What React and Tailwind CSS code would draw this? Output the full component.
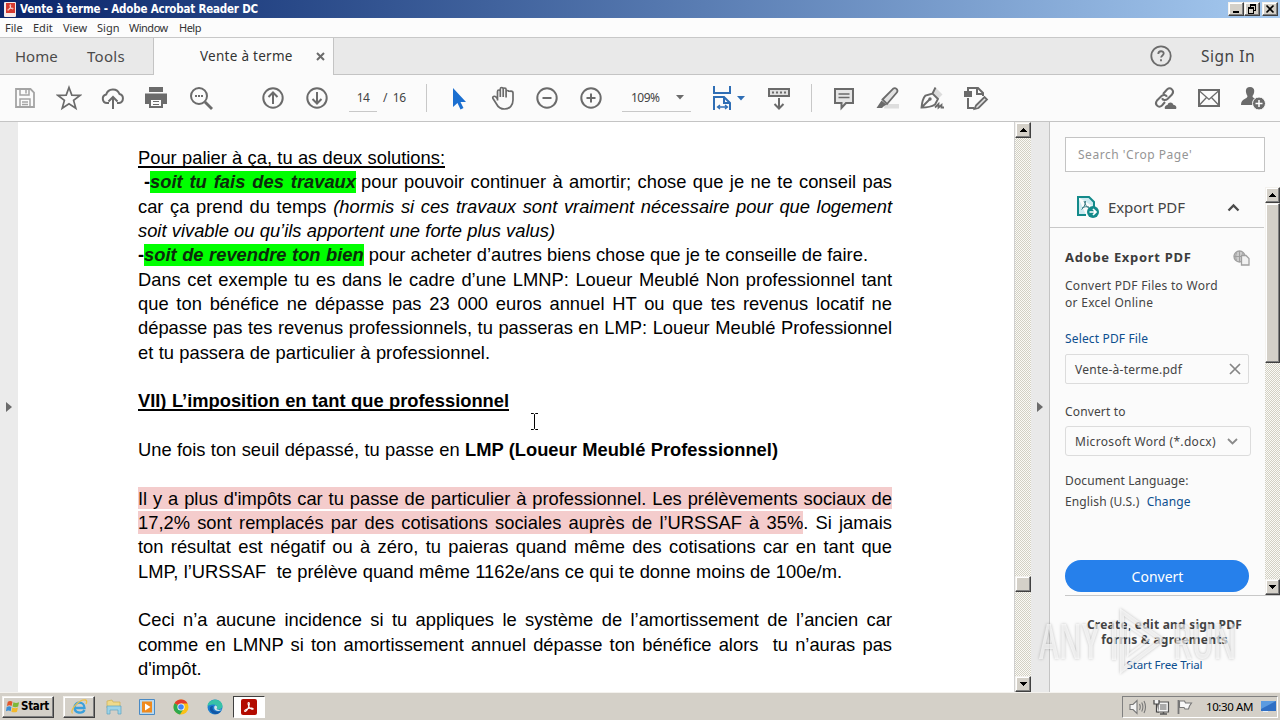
const DITHER =
  'bg-[repeating-conic-gradient(#d2d0c4_0_25%,#fbfaf6_0_50%)] bg-[length:2px_2px]';
const RAISED =
  'bg-[#d4d0c8] border border-t-[#f4f2ee] border-l-[#f4f2ee] border-r-[#404040] border-b-[#404040] shadow-[inset_-1px_-1px_0_#808080,inset_1px_1px_0_#fff]';

function Icon({ size = 26, children, className = '' }) {
  return (
    <svg
      width={size}
      height={size}
      viewBox="0 0 26 26"
      fill="none"
      stroke="#6b6b6b"
      strokeWidth="2"
      className={`shrink-0 ${className}`}
    >
      {children}
    </svg>
  );
}

function Slot({ children }) {
  return <div className="w-11 flex justify-center shrink-0">{children}</div>;
}

function Arrow({ dir = 'up' }) {
  return (
    <svg width="7" height="4" viewBox="0 0 7 4" shapeRendering="crispEdges">
      <path d={dir === 'up' ? 'M3 0h1v1h1v1h1v1h1v1H0V3h1V2h1V1h1z' : 'M0 0h7v1H6v1H5v1H4v1H3V3H2V2H1V1H0z'} fill="#000" />
    </svg>
  );
}

function ScrollButton({ dir }) {
  return (
    <div className={`h-4 w-full shrink-0 flex items-center justify-center ${RAISED}`}>
      <Arrow dir={dir} />
    </div>
  );
}

function WinButton({ children, className = '' }) {
  return (
    <div className={`w-4 h-[14px] flex items-center justify-center ${RAISED} ${className}`}>
      <svg className="shrink-0" width="12" height="10" viewBox="0 0 12 10" fill="none" stroke="#000" shapeRendering="crispEdges">
        {children}
      </svg>
    </div>
  );
}

function AcrobatMark({ size, stroke }) {
  return (
    <svg width={size} height={size} viewBox="0 0 20 20" fill="none" stroke={stroke} strokeWidth="1.5">
      <path d="M9.5 3.5c1.8 0 1 4.5-1 8.5-1.5 3-3.5 5-4.5 4.2-1-1 1.5-3.2 5-4.2 3.5-.9 7-.8 7 .6 0 1.6-3.3.5-5.2-1.8C8.5 8 8 3.5 9.5 3.5z" />
    </svg>
  );
}

function TitleBar() {
  return (
    <div className="h-[18px] flex items-center bg-linear-to-r from-[#0a246a] to-[#a6caf0] pl-1 pr-[2px]">
      <div className="w-3 h-[15px] bg-[#f6e9e8] rounded-[1px] flex flex-col items-center">
        <div className="mt-px bg-[#d63a2f] w-[9px] h-[10px] flex items-center justify-center">
          <AcrobatMark size={9} stroke="#fff" />
        </div>
      </div>
      <span className="ml-[4px] text-white font-bold text-[11.5px] tracking-[-0.19px] leading-[17px] whitespace-nowrap font-['DejaVu_Sans_Condensed','DejaVu_Sans',sans-serif]">
        Vente à terme - Adobe Acrobat Reader DC
      </span>
      <div className="ml-auto flex">
        <WinButton>
          <path d="M3 8h6" strokeWidth="2" />
        </WinButton>
        <WinButton>
          <path d="M4 1h6" strokeWidth="2" />
          <path d="M4.5 1v2M9.500 1v5H8" />
          <path d="M2 4h6" strokeWidth="2" />
          <path d="M2.500 4v5.500h5V4" />
        </WinButton>
        <WinButton className="ml-[2px]">
          <path d="M2.500 1.500l7 7M9.500 1.500l-7 7" strokeWidth="1.700" shapeRendering="auto" />
        </WinButton>
      </div>
    </div>
  );
}

function MenuBar() {
  return (
    <div className="h-[19px] flex items-center bg-[#fcfcfc] pl-[5px] text-[11px] leading-none text-[#333] font-['Noto_Sans',sans-serif]">
      <span className="w-[28px]">File</span>
      <span className="w-[30px]">Edit</span>
      <span className="w-[34px]">View</span>
      <span className="w-[32px]">Sign</span>
      <span className="w-[50px] tracking-[-0.5px]">Window</span>
      <span className="tracking-[-0.5px]">Help</span>
    </div>
  );
}

function TabBar() {
  return (
    <div className="h-[38px] flex bg-[#e9e9e9] border-t border-[#c8c8c8] text-[#4b4b4b] font-['Noto_Sans',sans-serif]">
      <div className="w-[154px] flex items-center border-b border-r border-[#c4c4c4] pl-[15px] text-[15px]">
        <span className="w-[72px]">Home</span>
        <span className="tracking-[0.3px]">Tools</span>
      </div>
      <div className="w-[179px] flex items-center bg-[#fbfbfb] pl-[46px] pr-2 text-[13.5px] text-[#333]">
        <span className="tracking-[0.02em] whitespace-nowrap">Vente à terme</span>
        <svg className="ml-auto" width="9" height="9" viewBox="0 0 9 9" stroke="#6b6b6b" strokeWidth="2">
          <path d="M1 1l7 7M8 1L1 8" />
        </svg>
      </div>
      <div className="flex-1 flex items-center border-b border-l border-[#c4c4c4] pr-[25px]">
        <svg className="ml-auto" width="22" height="22" viewBox="0 0 22 22" fill="none" stroke="#6b6b6b" strokeWidth="1.8">
          <circle cx="11" cy="11" r="9.7" />
          <path d="M8.3 9c0-3.600 5.400-3.600 5.400-.4 0 1.800-2.600 2-2.600 4" />
          <path d="M11 14.3v2" />
        </svg>
        <span className="ml-[29px] mt-[2px] text-[15.5px] tracking-[0.5px] text-[#444] whitespace-nowrap">Sign In</span>
      </div>
    </div>
  );
}

function Toolbar() {
  return (
    <div className="h-[47px] flex items-center bg-[#fbfbfb] border-b border-[#c4c4c4] pl-[3px] text-[12px] text-[#444] font-['Noto_Sans',sans-serif]">
      <Slot>
        <Icon className="opacity-60">
          <path d="M4 4h14.5L22 7.500V22H4z" strokeWidth="1.800" />
          <path d="M8 4v6h9V4M14 5v3.500M8 22v-8h10v8M10 17h6M10 19.500h6" strokeWidth="1.500" />
        </Icon>
      </Slot>
      <Slot>
        <Icon>
          <path d="M13 2.500l2.800 7.600 8.200.3-6.400 5 2.200 7.800L13 18.700l-6.800 4.500 2.200-7.800-6.400-5 8.200-.3z" strokeWidth="1.700" />
        </Icon>
      </Slot>
      <Slot>
        <Icon>
          <path d="M9 18H7a4.300 4.300 0 0 1-.8-8.500A7 7 0 0 1 19.500 9a4.600 4.600 0 0 1-.5 9h-2" />
          <path d="M13 24V12.500M8.500 16.500L13 12l4.500 4.500" />
        </Icon>
      </Slot>
      <Slot>
        <Icon>
          <path d="M5 2h14v5H5z" fill="#6b6b6b" stroke="none" />
          <path d="M1 8.500h22v10.500h-4v-5H5v5H1z" fill="#6b6b6b" stroke="none" />
          <path d="M6 14h12v8H6z" />
          <path d="M9 16.500h6M9 19.500h6" strokeWidth="1" />
        </Icon>
      </Slot>
      <Slot>
        <Icon>
          <circle cx="11" cy="11" r="8" />
          <path d="M17 17l7 7" strokeWidth="2.800" />
          <path d="M7 11h2M10 11h2M13 11h2" strokeWidth="1.800" />
        </Icon>
      </Slot>
      <div className="w-[28px]" />
      <Slot>
        <Icon>
          <circle cx="13" cy="13" r="9.700" />
          <path d="M13 19V8M8.500 12L13 7.500l4.500 4.500" />
        </Icon>
      </Slot>
      <Slot>
        <Icon>
          <circle cx="13" cy="13" r="9.700" />
          <path d="M13 7v11M8.500 14L13 18.500l4.500-4.500" />
        </Icon>
      </Slot>
      <div className="ml-[10px] w-[28px] h-[27px] flex items-center justify-center border-b border-[#c8c8c8] tracking-[-0.5px]">14</div>
      <span className="ml-[6px] w-[43px] whitespace-pre tracking-[-0.3px]">/  16</span>
      <div className="w-px h-7 bg-[#c8c8c8]" />
      <div className="w-[10px]" />
      <Slot>
        <Icon>
          <path d="M7 3v19l4.500-4 3 6.500 3-1.500-3-6H20z" fill="#1b6fd0" stroke="none" />
        </Icon>
      </Slot>
      <Slot>
        <Icon>
          <path
            d="M7.500 15.500V6.500c0-2 2.800-2 2.800 0V12 4c0-2 2.900-2 2.900 0v8-7.500c0-2 2.900-2 2.900 0V12.500 7c0-2 2.900-2 2.900 0M19 7c0-1 4-1.500 4 1v7c0 5-3 9-8.500 9-4.500 0-6.500-2-8-5l-3.500-5.500c-1-2 1.500-3 3-1.500l2 2.500"
            strokeWidth="1.700"
          />
        </Icon>
      </Slot>
      <Slot>
        <Icon>
          <circle cx="13" cy="13" r="9.700" />
          <path d="M8.500 13h9" />
        </Icon>
      </Slot>
      <Slot>
        <Icon>
          <circle cx="13" cy="13" r="9.700" />
          <path d="M8.500 13h9M13 8.500v9" />
        </Icon>
      </Slot>
      <div className="ml-[9px] w-[69px] h-[27px] flex items-center border-b border-[#c8c8c8] pl-[9px] pr-[7px]">
        <span className="tracking-[-0.5px]">109%</span>
        <svg className="ml-auto" width="8" height="5">
          <path d="M0 0h8L4 4.500z" fill="#6b6b6b" />
        </svg>
      </div>
      <div className="ml-[18px] flex items-center">
        <Icon>
          <g stroke="#2f6eb5">
            <path d="M5 1v7h16V1" />
            <path d="M5 25V12h10l6 6v7M15 12v6h6" />
            <path d="M9 22h9M11 20l-2.500 2 2.500 2M16 20l2.500 2-2.500 2" strokeWidth="1.300" />
          </g>
        </Icon>
        <svg className="ml-[2px]" width="8" height="5">
          <path d="M0 0h8L4 4.500z" fill="#2f6eb5" />
        </svg>
      </div>
      <div className="ml-[12px]">
        <Slot>
          <Icon>
            <path d="M3 4h20v7H3z" fill="#e0e0e0" />
            <path d="M6 7.500h14" strokeDasharray="2 2" />
            <path d="M13 13v10M8.500 19l4.500 4.500 4.500-4.500" />
          </Icon>
        </Slot>
      </div>
      <div className="ml-[10px] w-px h-7 bg-[#c8c8c8]" />
      <div className="w-[10px]" />
      <Slot>
        <Icon>
          <path d="M4 4h18v14h-7l-4.500 5v-5H4z" fill="#e6e6e6" />
          <path d="M7.500 9h11M7.500 12.500h11" strokeWidth="1.500" />
        </Icon>
      </Slot>
      <Slot>
        <Icon>
          <path d="M10 19h14v4.500H9z" fill="#dedede" stroke="none" />
          <path d="M7.500 14.500L18 3.800c2.500-2 5.500 1 4 3.500L12 19z" fill="#e2e2e2" strokeWidth="1.800" />
          <path d="M6.500 15.500l5 4-3 2-1.500 1.500H1.500z" fill="#6b6b6b" stroke="none" />
        </Icon>
      </Slot>
      <Slot>
        <Icon>
          <path d="M14 8.500L16.500 2.500l7 7-4.500 4.500z" fill="#dcdcdc" stroke="none" />
          <path d="M2.500 22.500c.5-5 1-9 4-12l7-2L19 14l-3 5.500c-3 2-8 3-13.500 3zM3.500 21.500l7-7M13.500 8.500L16.500 2.500" strokeWidth="1.900" />
          <circle cx="11" cy="14" r="1.700" fill="#6b6b6b" stroke="none" />
          <path d="M16 22.500l3.500-3.500v3.500l3-2.500v2.500H25" strokeWidth="1.800" />
        </Icon>
      </Slot>
      <Slot>
        <Icon>
          <path d="M5 6V3h10l5 5v3M14 3v6h6M5 13v10h6" strokeWidth="2" />
          <path d="M1 6h8v6H1z" fill="#6b6b6b" stroke="none" />
          <path d="M13 20.500L21.500 12l2.500 2.500L15.500 23l-4 1z" fill="#e2e2e2" strokeWidth="1.800" />
        </Icon>
      </Slot>
      <div className="ml-auto flex pr-[5px]">
        <Slot>
          <Icon>
            <path d="M11 9l4-4.500c3.500-3 8 1 5 5l-4.500 4.500c-2 1.700-4.500 1.300-5.500-.8" />
            <path d="M13 17l-3 3.500c-3.500 3-8-1-5-5L9.500 11c2-1.700 4.500-1.300 5.500.8" />
            <path d="M13 24c-1-3 1.500-4 2.500-4 1-3.500 5.500-3 6 0 2.500 0 3.500 2.500 2.500 4z" fill="#6b6b6b" stroke="none" />
          </Icon>
        </Slot>
        <Slot>
          <Icon>
            <path d="M3 5h20v16H3z" />
            <path d="M3 5.500l10 9 10-9M3 20.500l7.500-8M23 20.500l-7.500-8" strokeWidth="1.300" />
          </Icon>
        </Slot>
        <Slot>
          <Icon>
            <path d="M10 2c6 0 4.500 7 2.500 9 0 2.500 3.500 2 4.500 4l-3 5H1c0-7 6.500-5.500 6.500-9C5.500 8 4.500 2 10 2z" fill="#6b6b6b" stroke="none" />
            <circle cx="19" cy="18.500" r="6.500" fill="#6b6b6b" stroke="#fbfbfb" strokeWidth="1" />
            <path d="M15.500 18.500h7M19 15v7" stroke="#fff" strokeWidth="1.500" />
          </Icon>
        </Slot>
      </div>
    </div>
  );
}

function Line({ className = 'w-[754px]', children }) {
  return (
    <div className={`h-[24.33px] whitespace-nowrap text-justify [text-align-last:justify] ${className}`}>
      {children}
    </div>
  );
}

function Green({ className, children }) {
  return (
    <b className={`bg-[#00ff00] italic block h-[22px] mt-px leading-[22px] text-[#0b2b0b] [text-align-last:justify] ${className}`}>
      {children}
    </b>
  );
}

function Pink({ children }) {
  return <span className="bg-[#f4cccc] py-[0.75px]">{children}</span>;
}

function Page() {
  return (
    <div className="flex-1 bg-white overflow-hidden pl-[120px] pt-[24px] text-[18.33px] leading-[24.33px] text-black font-['Liberation_Sans',Arial,sans-serif]">
      <Line className="w-[307px] underline decoration-[1.5px] underline-offset-[2px] [text-decoration-skip-ink:none]">
        Pour palier à ça, tu as deux solutions:
      </Line>
      <Line className="w-[754px] flex">
        <b className="pl-[6px] w-[12px]">-</b>
        <Green className="w-[206px]">soit tu fais des travaux</Green>
        <span className="flex-1 pl-[5px]">pour pouvoir continuer à amortir; chose que je ne te conseil pas</span>
      </Line>
      <Line>
        car ça prend du temps <i>(hormis si ces travaux sont vraiment nécessaire pour que logement</i>
      </Line>
      <Line className="w-[417px] italic">soit vivable ou qu’ils apportent une forte plus valus)</Line>
      <Line className="w-[730px] flex">
        <b className="w-[6px]">-</b>
        <Green className="w-[220px]">soit de revendre ton bien</Green>
        <span className="flex-1 pl-[5px]">pour acheter d’autres biens chose que je te conseille de faire.</span>
      </Line>
      <Line>Dans cet exemple tu es dans le cadre d’une LMNP: Loueur Meublé Non professionnel tant</Line>
      <Line>que ton bénéfice ne dépasse pas 23 000 euros annuel HT ou que tes revenus locatif ne</Line>
      <Line>dépasse pas tes revenus professionnels, tu passeras en LMP: Loueur Meublé Professionnel</Line>
      <Line className="w-[352px]">et tu passera de particulier à professionnel.</Line>
      <Line />
      <Line className="w-[371px] tracking-[-0.02px] font-bold underline decoration-2 underline-offset-[2px] [text-decoration-skip-ink:none]">
        VII) L’imposition en tant que professionnel
      </Line>
      <Line />
      <Line className="w-[640px]">
        Une fois ton seuil dépassé, tu passe en <b>LMP (Loueur Meublé Professionnel)</b>
      </Line>
      <Line />
      <Line>
        <Pink>Il y a plus d'impôts car tu passe de particulier à professionnel. Les prélèvements sociaux de</Pink>
      </Line>
      <Line>
        <Pink>17,2% sont remplacés par des cotisations sociales auprès de l’URSSAF à 35%</Pink>. Si jamais
      </Line>
      <Line>ton résultat est négatif ou à zéro, tu paieras quand même des cotisations car en tant que</Line>
      <Line className="w-[704px]">LMP, l’URSSAF&nbsp; te prélève quand même 1162e/ans ce qui te donne moins de 100e/m.</Line>
      <Line />
      <Line>Ceci n’a aucune incidence si tu appliques le système de l’amortissement de l’ancien car</Line>
      <Line>comme en LMNP si ton amortissement annuel dépasse ton bénéfice alors&nbsp; tu n’auras pas</Line>
      <Line className="w-[64px]">d'impôt.</Line>
    </div>
  );
}

function SidePanel() {
  return (
    <div className="relative w-[231px] border-l border-[#c4c4c4] bg-[#fbfbfb] flex flex-col font-['Noto_Sans',sans-serif] text-[12px] text-[#444]">
      <div className="ml-[15px] mt-[15px] w-[200px] h-[35px] shrink-0 border border-[#c4c4c4] bg-white flex items-center pl-3 pt-px text-[#959595] tracking-[0.53px]">
        Search 'Crop Page'
      </div>
      <div className="flex h-[408px] mt-[15px] shrink-0">
        <div className="w-[214px] flex flex-col">
          <div className="h-[41px] shrink-0 border-b border-[#c8c8c8] flex items-center pl-[26px] pr-[24px]">
            <svg width="24" height="24" viewBox="0 0 24 24" fill="none" stroke="#138a8a" strokeWidth="2">
              <path d="M2 2h11l5 5v5M2 2v18h8" fill="#cdeaf0" />
              <path d="M2 1v19h8" />
              <path d="M8 6c1.500 3 2 6 5 7M9.500 6c0 4-2 7-4 8.500M6 13c2-1.500 5-1.500 7-1" stroke="#3d7e86" strokeWidth="1" />
              <circle cx="17" cy="17" r="6" fill="#138a8a" stroke="none" />
              <path d="M13.500 17h6M17 14l3 3-3 3" stroke="#fff" strokeWidth="1.700" />
            </svg>
            <span className="ml-[8px] text-[15px] tracking-[-0.1px] whitespace-nowrap">Export PDF</span>
            <svg className="ml-auto" width="13" height="9" viewBox="0 0 13 9" fill="none" stroke="#4b4b4b" strokeWidth="2.300">
              <path d="M1.500 7.500l5-5 5 5" />
            </svg>
          </div>
          <div className="pl-[15px] pr-[14px] flex flex-col">
            <div className="mt-[20px] h-5 flex items-center justify-between">
              <b className="text-[13px] tracking-[0.7px] text-[#3c3c3c]">Adobe Export PDF</b>
              <svg width="17" height="16" viewBox="0 0 17 16" fill="none" stroke="#a0a0a0" strokeWidth="1.300">
                <circle cx="6.500" cy="6.500" r="5.500" fill="#ccc" />
                <path d="M1 6.500h11M6.500 1v11M3.500 2.500c-1 3-1 5 0 8M9.500 2.500c1 3 1 5 0 8" strokeWidth="1" />
                <path d="M8.500 5.500H13l3 3V15H8.500z" fill="#f2f2f2" />
              </svg>
            </div>
            <p className="mt-[9px] leading-[17px] whitespace-nowrap tracking-[0.28px]">
              Convert PDF Files to Word
              <br />
              or Excel Online
            </p>
            <a className="mt-[19px] leading-[17px] tracking-[0.15px] text-[#0d4f8f]">Select PDF File</a>
            <div className="mt-[7px] w-[184px] h-[30px] rounded-[2px] border border-[#dcdcdc] flex items-center justify-between pl-[9px] pr-[7px]">
              <span className="pt-px tracking-[0.25px]">Vente-à-terme.pdf</span>
              <svg width="12" height="12" viewBox="0 0 12 12" stroke="#858585" strokeWidth="1.700">
                <path d="M1 1l10 10M11 1L1 11" />
              </svg>
            </div>
            <span className="mt-[19px] leading-[17px] tracking-[0.15px]">Convert to</span>
            <div className="mt-[6px] w-[186px] h-[30px] rounded-[3px] border border-[#dcdcdc] flex items-center justify-between pl-[9px] pr-[12px]">
              <span className="pt-[2px] whitespace-nowrap tracking-[0.32px]">Microsoft Word (*.docx)</span>
              <svg width="11" height="7" viewBox="0 0 11 7" fill="none" stroke="#8a8a8a" strokeWidth="1.800">
                <path d="M1 1l4.500 4.500L10 1" />
              </svg>
            </div>
            <span className="mt-[16px] leading-[17px] tracking-[0.12px]">Document Language:</span>
            <span className="mt-[4px] leading-[17px] whitespace-nowrap tracking-[0.12px]">
              English (U.S.) <a className="ml-[4px] text-[#0d4f8f]">Change</a>
            </span>
            <button className="mt-[50px] w-[184px] h-8 rounded-full bg-[#2680eb] text-white text-[14px] pl-px">Convert</button>
          </div>
        </div>
        <div className={`w-4 flex flex-col ml-px ${DITHER}`}>
          <ScrollButton dir="up" />
          <div className={`h-[160px] ${RAISED}`} />
          <div className="flex-1" />
          <ScrollButton dir="down" />
        </div>
      </div>
      <div className="ml-[15px] border-t border-[#c8c8c8] pr-4 text-center flex flex-col">
        <b className="mt-[21px] leading-[15px] text-[12px] text-[#444] whitespace-nowrap tracking-[0.23px]">
          Create, edit and sign PDF
          <br />
          forms &amp; agreements
        </b>
        <a className="mt-[9px] leading-[17px] text-[11.5px] tracking-[-0.15px] text-[#0d4f8f]">Start Free Trial</a>
      </div>
      <Watermark />
    </div>
  );
}

// translucent brand overlay in the lower right corner
function Watermark() {
  return (
    <div className="absolute left-[-11px] top-[486px] w-[196px] h-[66px] flex items-center justify-between text-white/65 [filter:drop-shadow(0_0_1.5px_rgba(0,0,0,0.35))] font-['Open_Sans',sans-serif] font-semibold text-[48px] leading-none">
      <span className="w-[64px] flex"><span className="origin-left scale-x-[0.62]">ANY</span></span>
      <svg width="60" height="66" viewBox="0 0 60 66" fill="none" stroke="#fff" strokeOpacity="0.65" strokeWidth="4">
        <path d="M14 4l40 28-40 30z" />
        <path d="M20 18l20 14-20 15z" strokeWidth="2" />
        <path d="M6 14v38" />
      </svg>
      <span className="w-[62px] flex"><span className="origin-left scale-x-[0.61]">RUN</span></span>
    </div>
  );
}

function TaskIcon({ children, className = '' }) {
  return <div className={`h-[22px] flex items-center justify-center ${className}`}>{children}</div>;
}

function Taskbar() {
  return (
    <div className="h-7 bg-[#d4d0c8] border-t border-[#f4f2ee] flex items-center pl-[2px] pr-[2px] font-['DejaVu_Sans_Condensed','DejaVu_Sans',sans-serif]">
      <div className={`w-[52px] h-[22px] flex items-center pl-[2px] ${RAISED}`}>
        <svg width="15" height="15" viewBox="0 0 16 16">
          <path d="M3 3c2-1.500 3.500-1 5 0L7 7.500c-1.500-1-3-1-5 0z" fill="#e2572b" />
          <path d="M9 3.500c2 1 3.500 1 6 0l-1 4.500c-2 1-4 1-6 0z" fill="#7db83a" />
          <path d="M1.800 8.500c2-1 3.500-1 5 0L6 13c-1.500-1-3-1-5 0z" fill="#3a8fd6" />
          <path d="M7.800 9c2 1 4 1 6 0l-1 4.500c-2 1-4 1-6 0z" fill="#f3b92b" />
        </svg>
        <b className="ml-[1px] mt-px text-[11.5px] tracking-[-0.3px]">Start</b>
      </div>
      <TaskIcon className={`ml-[9px] w-8 ${RAISED}`}>
        <svg width="18" height="18" viewBox="0 0 18 18" fill="none">
          <path d="M14.500 12c-2 4-10 3.500-10-2.500 0-6.500 10-6.500 10 .5H5" stroke="#3aa0dc" strokeWidth="2.300" />
          <path d="M2.500 15.500C-1 13 9 1 15.500 2c2 .5 1 3 .5 4" stroke="#ecc04a" strokeWidth="1.300" />
        </svg>
      </TaskIcon>
      <TaskIcon className="w-[37px]">
        <svg width="16" height="17" viewBox="0 0 16 17">
          <path d="M1 3l5-1 1 2h7v6H1z" fill="#efd98a" stroke="#cdaf50" strokeWidth=".7" />
          <path d="M1 8h14v8h-3v-4H4v4H1z" fill="#9ed4e8" stroke="#5da3c2" strokeWidth=".7" />
        </svg>
      </TaskIcon>
      <TaskIcon className="w-[30px]">
        <svg width="16" height="16" viewBox="0 0 16 16">
          <path d="M.5.500h15v15H.5z" fill="#b9d9f0" stroke="#4a8ac4" />
          <path d="M3 2.500h10v11H3z" fill="#f08a1d" />
          <path d="M6 4.500l5.500 3.500L6 11.500z" fill="#fff" />
        </svg>
      </TaskIcon>
      <TaskIcon className="w-[37px]">
        <svg width="16" height="16" viewBox="0 0 16 16">
          <circle cx="8" cy="8" r="7.500" fill="#fbc116" />
          <path d="M8 8L1.500 4.200A7.500 7.500 0 0 1 14.600 4.500H8z" fill="#e33b2e" />
          <path d="M8 8L1.500 4.200A7.500 7.500 0 0 0 7 15.400L10.500 10z" fill="#2da94f" />
          <circle cx="8" cy="8" r="3.600" fill="#fff" />
          <circle cx="8" cy="8" r="2.800" fill="#4285f4" />
        </svg>
      </TaskIcon>
      <TaskIcon className="w-[32px]">
        <svg width="16" height="16" viewBox="0 0 16 16">
          <circle cx="8" cy="8" r="7.500" fill="#1b7fd0" />
          <path d="M.5 7C1-1 15-1.500 15.500 7c0 3-4 4-6 3 1.500-2 0-4.500-3-4.500S.5 7 .5 7z" fill="#37c2a8" />
          <path d="M6 7c-2 4 3 7 8 5-3 4.500-9 4-11-1-.7-3 1-4.500 3-4z" fill="#1156a5" />
          <path d="M9.500 10c1.500-2 0-3.500-1.500-3.500-1.500 1.500-1 4 1 5 2 .8 4.500.3 6-1-2 .7-4 .5-5.500-.5z" fill="#d4e4ea" />
        </svg>
      </TaskIcon>
      <TaskIcon className="ml-[2px] w-8 bg-white border border-t-[#404040] border-l-[#404040] border-r-white border-b-white">
        <div className="w-4 h-4 rounded-[2px] bg-[#b30b00] flex items-center justify-center">
          <AcrobatMark size={14} stroke="#fff" />
        </div>
      </TaskIcon>
      <div className="ml-auto w-[156px] h-[22px] flex items-center border border-t-[#808080] border-l-[#808080] border-r-white border-b-white pl-[6px]">
        <svg width="18" height="16" viewBox="0 0 18 16" fill="none" stroke="#777" strokeWidth="1.100">
          <path d="M1 5.500h3l4-4v13l-4-4H1z" fill="#f4f4f4" />
          <path d="M10.500 5c1 2 1 4 0 6M12.700 3.500c1.600 3 1.600 6 0 9M15 2c2 4 2 8 0 12" />
        </svg>
        <svg className="ml-[6px]" width="17" height="16" viewBox="0 0 17 16" fill="none" stroke="#555" strokeWidth="1.200">
          <path d="M5 3h10.500v10H5z" stroke="#555" fill="#f4f4f4" />
          <path d="M7 5h6.500v6H7z" fill="#aaa" stroke="none" />
          <path d="M7 15h7M10.500 13v2" strokeWidth="1.500" />
          <path d="M1 1v4h5V1M3.500 5v8H6" stroke="#444" fill="#f4f4f4" />
        </svg>
        <svg className="ml-[6px]" width="17" height="16" viewBox="0 0 17 16" fill="none" stroke="#777" strokeWidth="1.100">
          <path d="M2.500 1v14" strokeWidth="1.800" />
          <path d="M3.500 2h5l1 2h6l-2 3-1 3H9L8 8.500H3.500z" fill="#f8f8f8" />
        </svg>
        <span className="ml-[13px] text-[11.5px] tracking-[-0.4px] whitespace-nowrap font-['Noto_Sans',sans-serif]">10:30 AM</span>
        <svg className="ml-auto mr-px" width="15" height="13" viewBox="0 0 15 13">
          <path d="M0 1h15v10H0z" fill="#2f6fc4" />
          <path d="M0 1h15L0 9z" fill="#5b9be0" />
          <path d="M2 11h5v1H2z" fill="#e8f0f8" />
        </svg>
      </div>
    </div>
  );
}

export default function App() {
  return (
    <div className="relative w-[1280px] h-[720px] overflow-hidden flex flex-col bg-[#fbfbfb]">
      <TitleBar />
      <MenuBar />
      <TabBar />
      <Toolbar />
      <div className="flex h-[570px] shrink-0">
        <div className="w-[18px] bg-[#ebebeb] flex items-center pl-[6px]">
          <svg width="6" height="10">
            <path d="M0 0l6 5-6 5z" fill="#6b6b6b" />
          </svg>
        </div>
        <Page />
        <div className={`w-[17px] flex flex-col border-l border-[#d0d0d0] ${DITHER}`}>
          <ScrollButton dir="up" />
          <div className="h-[438px]" />
          <div className={`h-4 ${RAISED}`} />
          <div className="flex-1" />
          <ScrollButton dir="down" />
        </div>
        <div className="w-[18px] bg-[#e9e9e9] flex items-center pl-[6px]">
          <svg width="6" height="10">
            <path d="M0 0l6 5-6 5z" fill="#6b6b6b" />
          </svg>
        </div>
        <SidePanel />
      </div>
      <Taskbar />
      {/* text cursor */}
      <svg className="absolute left-[530px] top-[413px]" width="9" height="17" viewBox="0 0 9 17" fill="none" stroke="#000">
        <path d="M1 .5h2.500l1 1 1-1H8M4.500 1.500v14M1 16.500h2.500l1-1 1 1H8" />
      </svg>
    </div>
  );
}
